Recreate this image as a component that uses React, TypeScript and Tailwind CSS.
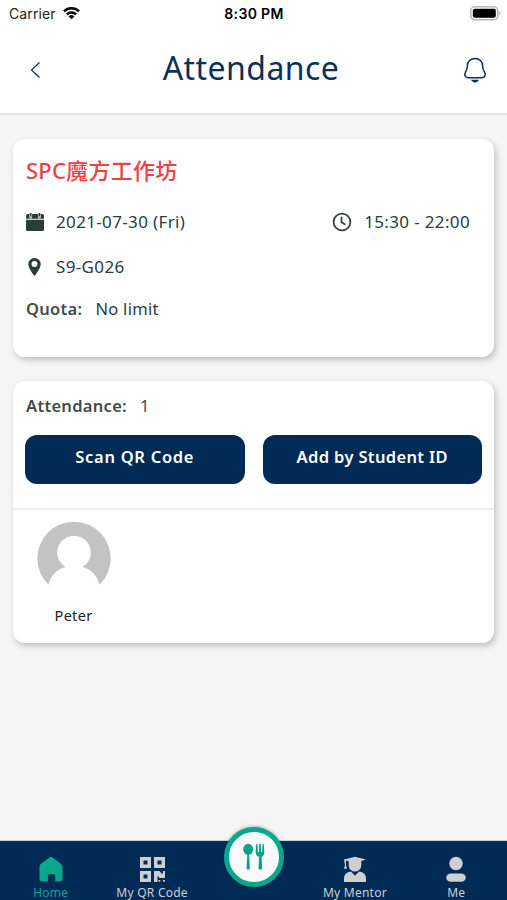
import React from 'react';

interface TabItemProps {
  label: string;
  active?: boolean;
  children: React.ReactNode;
}

const TabItem: React.FC<TabItemProps> = ({ label, active, children }) => (
  <button className={`flex h-full flex-col items-center pt-[15px] ${active ? 'text-[#08a88e]' : 'text-[#cfcfd2]'}`}>
    <svg className="h-7 w-7" viewBox="0 0 28 28" fill="currentColor">{children}</svg>
    <span className="mt-px whitespace-nowrap text-[12px] leading-[15px] tracking-[0.25px]">{label}</span>
  </button>
);

const StatusBar = () => (
  <div className="grid h-7 grid-cols-3 items-center pl-[9px] pr-[6px] font-['Inter',sans-serif] text-sm text-black">
    <div className="flex items-center gap-1.5">
      <span className="text-[14px] tracking-[0.1px] text-[#222]">Carrier</span>
      <svg className="-mt-0.5 h-[14px] w-[19px]" viewBox="0 0 20 15" fill="none" stroke="#000" strokeWidth="2.7">
        <path d="M1.9 5.7a11.5 11.5 0 0 1 16.2 0" />
        <path d="M5 9a7.2 7.2 0 0 1 10 0" />
        <path d="M10 14.3 6.9 11.2a4.4 4.4 0 0 1 6.2 0z" fill="#000" stroke="none" />
      </svg>
    </div>
    <span className="-ml-0.5 text-center text-[14px] font-semibold tracking-[0.35px]">8:30 PM</span>
    <svg className="-mt-0.5 h-[15px] w-[31px] justify-self-end" viewBox="0 0 31 15">
      <rect x="0.8" y="0.8" width="27" height="13" rx="4" fill="#fff" stroke="#b5b5b5" strokeWidth="1.5" />
      <rect x="2.8" y="2.8" width="23" height="9" rx="2" fill="#000" />
      <path d="M29 5.2q2 2 0 4.2z" fill="#a8a8a8" />
    </svg>
  </div>
);

const Header = () => (
  <header className="flex h-[87px] items-center justify-between border-b-2 border-[#e6e6e6] bg-white pl-[30px] pr-5 text-[#07305c]">
    <button aria-label="Back">
      <svg className="-mt-0.5 h-4 w-[11px]" viewBox="0 0 11 16" fill="none" stroke="currentColor" strokeWidth="1.2">
        <path d="M9.5.5 1.5 8l8 7.5" />
      </svg>
    </button>
    <h1 className="-ml-px pb-[5px] pr-px text-[32px] leading-10 tracking-[0.45px]">Attendance</h1>
    <button aria-label="Notifications">
      <svg className="-mt-0.5 h-[26px] w-6" viewBox="0 0 24 26" fill="none" stroke="currentColor" strokeWidth="1.5" strokeLinecap="round">
        <path d="M12 1.5c-4.3 0-7.6 2.9-7.6 7.2 0 3.2-.5 4.1-1.8 6.2-1.600 2.700-.9 5.900 2.400 5.900h14c3.300 0 4-3.200 2.400-5.900-1.300-2.100-1.800-3-1.800-6.200 0-4.300-3.300-7.200-7.600-7.200z" />
        <path d="M9.5 23.500q2.500 2.600 5 0z" />
      </svg>
    </button>
  </header>
);

const EventCard = () => (
  <section className="h-[218px] rounded-xl bg-white px-[13px] pt-[15px] shadow-[2px_3px_6px_rgba(0,0,0,0.22)]">
    <h2 className="text-[22px] font-medium leading-8 tracking-[0.25px] text-[#ef4045]">SPC魔方工作坊</h2>
    <div className="mt-[22px] flex h-7 items-center justify-between pr-3 text-[17px] tracking-[0.35px] text-[#2a3c43]">
      <div className="flex items-center gap-3">
        <svg className="h-[18px] w-[18px]" viewBox="0 0 18 18" fill="#2b3d38">
          <path d="M1.500 1h15Q18 1 18 2.500v3.300H0V2.500Q0 1 1.500 1zM0 6.800h18v9.700q0 1.500-1.500 1.500h-15Q0 18 0 16.500z" />
          <path d="M4.600 1v3.200M13.400 1v3.200" stroke="#b5c0ba" strokeWidth="3" strokeLinecap="round" />
          <path d="M4.600 0v3.300M13.400 0v3.300" stroke="#2b3d38" strokeWidth="1.400" />
        </svg>
        <span>2021-07-30 (Fri)</span>
      </div>
      <div className="flex items-center gap-3">
        <svg className="-mt-px h-5 w-5" viewBox="0 0 20 20" fill="none" stroke="#39443f" strokeWidth="1.8" strokeLinecap="round" strokeLinejoin="round">
          <circle cx="10" cy="10" r="8.4" />
          <path d="M9.5 5.5v4.800l3.300 2" />
        </svg>
        <span className="-mr-px">15:30 - 22:00</span>
      </div>
    </div>
    <div className="mt-[17px] flex h-7 items-center gap-3 text-[17px] tracking-[0.35px] text-[#2a3c43]">
      <svg className="-ml-px h-[18px] w-[19px]" viewBox="0 0 18 18" fill="#2b3d38" fillRule="evenodd">
        <path d="M9 0a6.200 6.200 0 0 0-6.200 6.200C2.800 10.500 9 18 9 18s6.200-7.500 6.200-11.800A6.200 6.200 0 0 0 9 0zm0 3.100a3 3 0 1 1 0 6 3 3 0 0 1 0-6z" />
      </svg>
      <span>S9-G026</span>
    </div>
    <div className="mt-[14px] flex h-7 items-center gap-[13px] text-[16.5px] tracking-[0.3px]">
      <span className="font-semibold text-[#414c49]">Quota:</span>
      <span className="text-[#2a3c43]">No limit</span>
    </div>
  </section>
);

const AttendanceCard = () => (
  <section className="mt-6 h-[262px] rounded-xl bg-white shadow-[2px_3px_6px_rgba(0,0,0,0.22)]">
    <div className="h-[129px] border-b-2 border-[#ececec] px-3 pt-[11px]">
      <div className="flex h-7 items-center gap-[13px] pl-px text-[16.5px] tracking-[0.3px] text-[#414c49]">
        <span className="font-semibold">Attendance:</span>
        <span>1</span>
      </div>
      <div className="mt-[15px] flex gap-[18px] text-[16.5px] font-semibold text-white">
        <button className="h-[49px] w-[220px] rounded-xl bg-[#002b54] pb-1 tracking-[0.7px]">Scan QR Code</button>
        <button className="h-[49px] w-[220px] rounded-xl bg-[#002b54] pb-1 tracking-[0.35px]">Add by Student ID</button>
      </div>
    </div>
    <div className="flex w-[121px] flex-col items-center pt-[11px]">
      <svg className="h-[74px] w-[74px]" viewBox="0 0 74 74">
        <path d="M11.500 63.800A36.700 36.700 0 1 1 62.500 63.800C60 54 54 48 45.500 46a16.800 16.800 0 1 0-17 0C20 48 14 54 11.500 63.800z" fill="#c3c3c3" />
      </svg>
      <span className="mt-2 text-[14.5px] leading-6 tracking-[0.3px] text-[#222]">Peter</span>
    </div>
  </section>
);

const TabBar = () => (
  <nav className="relative grid h-[60px] grid-cols-5 border-t border-[#cbd2da] bg-[#002b54]">
    <TabItem label="Home" active>
      <path d="M14 .8q.7 0 1.400.6l8.800 6.700q1.300 1.100 1.300 2.700v11.700q0 3-3 3h-4.200v-6q0-1.200-1.200-1.200h-5q-1.200 0-1.200 1.200v6H5.500q-3 0-3-3V10.800q0-1.600 1.300-2.700l8.800-6.700Q13.300.8 14 .8z" />
    </TabItem>
    <TabItem label="My QR Code">
      <path fillRule="evenodd" d="M2 1h11v11H2zm3.500 3.500v4h4v-4zM16 1h11v11H16zm3.500 3.500v4h4v-4zM2 15h11v11H2zm3.500 3.500v4h4v-4zM16 15h5.500l2 2.500H25V15h2v7h-5.500l-2-2.500v6.500H16zM20.500 24h1.800v1.800h-1.800zM25 24h1.800v1.800H25z" />
    </TabItem>
    <div className="flex justify-center">
      <button aria-label="Dining" className="-mt-[14px] ml-px flex h-[60px] w-[60px] items-center justify-center rounded-full border-[5px] border-[#08a88e] bg-[#f8faf9] shadow-[0_-1px_3px_rgba(0,0,0,0.25)]">
        <svg className="h-7 w-[26px]" viewBox="0 0 26 28" fill="#08a28a">
          <ellipse cx="7.200" cy="6.300" rx="5" ry="5.500" />
          <path d="M6.400 11H8l.9 14q0 1.800-1.700 1.800T5.500 25zM15.200 1h1.200l.5 8h1l.3-8h1.600l.3 8h1l.5-8h1.200l.5 8q0 4-2.700 4.800l.5 11.200q0 1.800-1.800 1.800T17.500 25l.5-11.200q-3.300-.8-3.300-4.800z" />
        </svg>
      </button>
    </div>
    <TabItem label="My Mentor">
      <path d="M3 3.500 14 .8l11 2.700-4.700 1.400v4.300a6.300 6.300 0 0 1-12.600 0V5.200L5 4.600v4.600l1 3.500H3l1-3.500zM3 25.500v-3q0-6 7-7l4 4.200 4-4.200q7 1 7 7v3q0 .5-.5.500h-21q-.5 0-.5-.5z" />
    </TabItem>
    <TabItem label="Me">
      <circle cx="14" cy="7.500" r="6.700" />
      <rect x="4.200" y="17.500" width="19.600" height="8.300" rx="4.800" />
    </TabItem>
  </nav>
);

export default function App() {
  return (
    <div className="flex h-[900px] w-[507px] flex-col overflow-hidden bg-[#f5f5f5] font-['Noto_Sans','Noto_Sans_CJK_TC',sans-serif]">
      <div className="bg-white">
        <StatusBar />
        <Header />
      </div>
      <main className="flex-1 px-[13px] pt-6">
        <EventCard />
        <AttendanceCard />
      </main>
      <TabBar />
    </div>
  );
}
